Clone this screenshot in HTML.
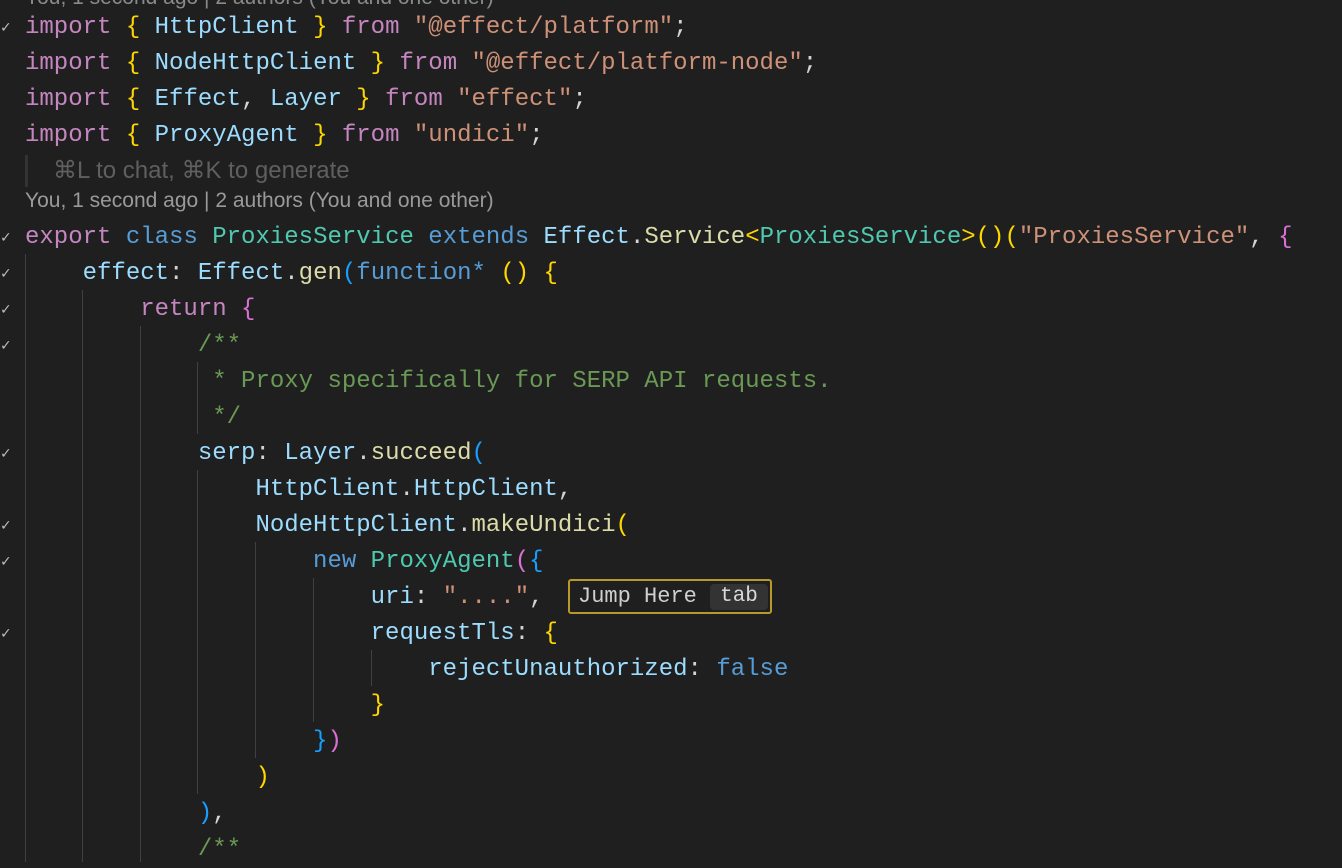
<!DOCTYPE html>
<html><head><meta charset="utf-8"><style>
html,body{margin:0;padding:0;background:#1f1f1f;width:1342px;height:862px;overflow:hidden}
.r{position:absolute;left:25px;height:36px;line-height:36px;margin-top:2px;font-family:"Liberation Mono","DejaVu Sans Mono",monospace;font-size:24px;white-space:pre;color:#9cdcfe}
.k{color:#c586c0}.b{color:#ffd700}.v{color:#9cdcfe}.s{color:#ce9178}.t{color:#4ec9b0}.kb{color:#569cd6}.f{color:#dcdcaa}.c{color:#6a9955}.p{color:#da70d6}.bl{color:#179fff}.w{color:#d4d4d4}
.g{position:absolute;width:1px;background:#404040}
.ck{position:absolute;left:0;width:12px;font-family:"DejaVu Sans",sans-serif;font-size:14px;color:#bbb;line-height:36px;margin-top:2px}
.ui{position:absolute;font-family:"Liberation Sans",sans-serif;white-space:pre}
</style></head><body>
<div class="ui" style="left:25px;top:-14px;font-size:21px;color:#8a8a8a">You, 1 second ago | 2 authors (You and one other)</div>
<div class="r" style="top:8px"><span class="k">import</span> <span class="b">{</span> HttpClient <span class="b">}</span> <span class="k">from</span> <span class="s">"@effect/platform"</span><span class="w">;</span></div>
<div class="r" style="top:44px"><span class="k">import</span> <span class="b">{</span> NodeHttpClient <span class="b">}</span> <span class="k">from</span> <span class="s">"@effect/platform-node"</span><span class="w">;</span></div>
<div class="r" style="top:80px"><span class="k">import</span> <span class="b">{</span> Effect<span class="w">,</span> Layer <span class="b">}</span> <span class="k">from</span> <span class="s">"effect"</span><span class="w">;</span></div>
<div class="r" style="top:116px"><span class="k">import</span> <span class="b">{</span> ProxyAgent <span class="b">}</span> <span class="k">from</span> <span class="s">"undici"</span><span class="w">;</span></div>
<div class="g" style="left:25px;top:155px;height:32px;background:#333;width:3px"></div>
<div class="ui" style="left:53px;top:156px;font-size:24px;color:#5f5f5f">⌘L to chat, ⌘K to generate</div>
<div class="ui" style="left:25px;top:189px;font-size:21px;color:#9a9a9a">You, 1 second ago | 2 authors (You and one other)</div>

<div class="g" style="left:25px;top:254px;height:608px"></div>
<div class="g" style="left:82px;top:290px;height:572px"></div>
<div class="g" style="left:140px;top:326px;height:536px"></div>
<div class="g" style="left:197px;top:362px;height:72px"></div>
<div class="g" style="left:197px;top:470px;height:324px"></div>
<div class="g" style="left:255px;top:542px;height:216px"></div>
<div class="g" style="left:313px;top:578px;height:144px"></div>
<div class="g" style="left:371px;top:650px;height:36px"></div>

<div class="r" style="top:218px"><span class="k">export</span> <span class="kb">class</span> <span class="t">ProxiesService</span> <span class="kb">extends</span> Effect<span class="w">.</span><span class="f">Service</span><span class="b">&lt;</span><span class="t">ProxiesService</span><span class="b">&gt;()(</span><span class="s">"ProxiesService"</span><span class="w">,</span> <span class="p">{</span></div>
<div class="r" style="top:254px">    effect<span class="w">:</span> Effect<span class="w">.</span><span class="f">gen</span><span class="bl">(</span><span class="kb">function*</span> <span class="b">() {</span></div>
<div class="r" style="top:290px">        <span class="k">return</span> <span class="p">{</span></div>
<div class="r" style="top:326px">            <span class="c">/**</span></div>
<div class="r" style="top:362px">            <span class="c"> * Proxy specifically for SERP API requests.</span></div>
<div class="r" style="top:398px">            <span class="c"> */</span></div>
<div class="r" style="top:434px">            serp<span class="w">:</span> Layer<span class="w">.</span><span class="f">succeed</span><span class="bl">(</span></div>
<div class="r" style="top:470px">                HttpClient<span class="w">.</span>HttpClient<span class="w">,</span></div>
<div class="r" style="top:506px">                NodeHttpClient<span class="w">.</span><span class="f">makeUndici</span><span class="b">(</span></div>
<div class="r" style="top:542px">                    <span class="kb">new</span> <span class="t">ProxyAgent</span><span class="p">(</span><span class="bl">{</span></div>
<div class="r" style="top:578px">                        uri<span class="w">:</span> <span class="s">"...."</span><span class="w">,</span></div>
<div class="r" style="top:614px">                        requestTls<span class="w">:</span> <span class="b">{</span></div>
<div class="r" style="top:650px">                            rejectUnauthorized<span class="w">:</span> <span class="kb">false</span></div>
<div class="r" style="top:686px">                        <span class="b">}</span></div>
<div class="r" style="top:722px">                    <span class="bl">}</span><span class="p">)</span></div>
<div class="r" style="top:758px">                <span class="b">)</span></div>
<div class="r" style="top:794px">            <span class="bl">)</span><span class="w">,</span></div>
<div class="r" style="top:830px">            <span class="c">/**</span></div>

<div style="position:absolute;left:568px;top:579px;width:204px;height:35px;border:2px solid #b8992a;border-radius:3px;box-sizing:border-box"></div>
<div style="position:absolute;left:578px;top:580px;height:33px;line-height:33px;font-family:'Liberation Mono',monospace;font-size:22px;color:#cfcfcf;white-space:pre">Jump Here</div>
<div style="position:absolute;left:710px;top:584px;width:58px;height:26px;background:#333;border-radius:4px;line-height:26px;text-align:center;font-family:'Liberation Mono',monospace;font-size:21px;color:#d8d8d8">tab</div>

<div class="ck" style="top:8px">✓</div>
<div class="ck" style="top:218px">✓</div>
<div class="ck" style="top:254px">✓</div>
<div class="ck" style="top:290px">✓</div>
<div class="ck" style="top:326px">✓</div>
<div class="ck" style="top:434px">✓</div>
<div class="ck" style="top:506px">✓</div>
<div class="ck" style="top:542px">✓</div>
<div class="ck" style="top:614px">✓</div>
</body></html>
